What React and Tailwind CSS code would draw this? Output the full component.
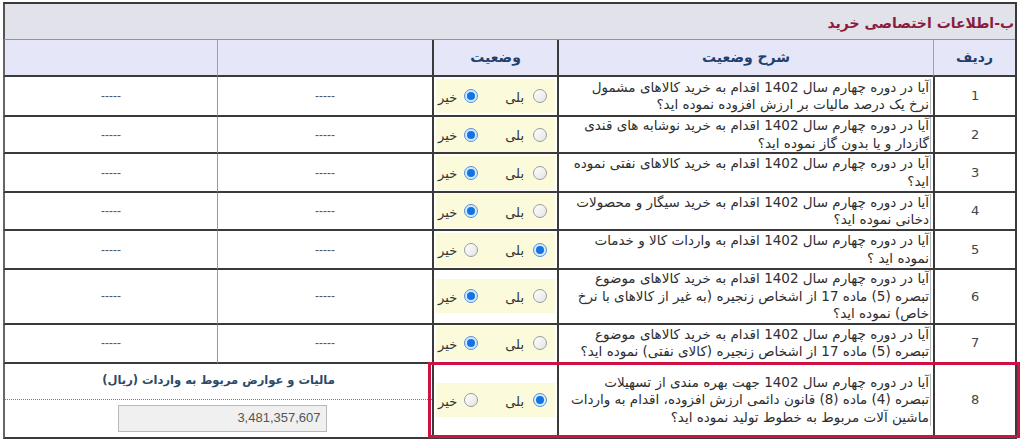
import React from 'react';

const rows = [
    { n: 1, h: 'h-[40px]', yes: false, lines: ['آیا در دوره چهارم سال 1402 اقدام به خرید کالاهای مشمول', 'نرخ یک درصد مالیات بر ارزش افزوده نموده اید؟'] },
    { n: 2, h: 'h-[37px]', yes: false, lines: ['آیا در دوره چهارم سال 1402 اقدام به خرید نوشابه های قندی', 'گازدار و یا بدون گاز نموده اید؟'] },
    { n: 3, h: 'h-[39px]', yes: false, lines: ['آیا در دوره چهارم سال 1402 اقدام به خرید کالاهای نفتی نموده', 'اید؟'] },
    { n: 4, h: 'h-[38px]', yes: false, lines: ['آیا در دوره چهارم سال 1402 اقدام به خرید سیگار و محصولات', 'دخانی نموده اید؟'] },
    { n: 5, h: 'h-[39px]', yes: true, lines: ['آیا در دوره چهارم سال 1402 اقدام به واردات کالا و خدمات', 'نموده اید ؟'] },
    { n: 6, h: 'h-[53px]', yes: false, lines: ['آیا در دوره چهارم سال 1402 اقدام به خرید کالاهای موضوع', 'تبصره (5) ماده 17 از اشخاص زنجیره (به غیر از کالاهای با نرخ', 'خاص) نموده اید؟'] },
    { n: 7, h: 'h-[39px]', yes: false, lines: ['آیا در دوره چهارم سال 1402 اقدام به خرید کالاهای موضوع', 'تبصره (5) ماده 17 از اشخاص زنجیره (کالای نفتی) نموده اید؟'] },
];

const last = {
    n: 8,
    yes: true,
    lines: ['آیا در دوره چهارم سال 1402 جهت بهره مندی از تسهیلات', 'تبصره (4) ماده (8) قانون دائمی ارزش افزوده، اقدام به واردات', 'ماشین آلات مربوط به خطوط تولید نموده اید؟'],
};

const fa = "font-['DejaVu_Sans',sans-serif]";
const cell = 'border-b-2 border-l-2 border-[#3a3a3a] p-0 align-middle';

function Radio({ checked }) {
    if (checked) {
        return (
            <span className="w-[14px] h-[14px] shrink-0 rounded-full border border-[#4b93dd] bg-[#d8e9fb] flex items-center justify-center">
                <span className="w-[8px] h-[8px] rounded-full bg-[#1473e0]" />
            </span>
        );
    }
    return <span className="w-[14px] h-[14px] shrink-0 rounded-full border border-[#9c9c9c] bg-gradient-to-br from-white to-[#e4e4e4]" />;
}

function Choice({ yes }) {
    return (
        <div className={`mx-[2px] h-[34px] bg-[#fbfbdc] flex items-center pr-[8px] text-[13px] text-[#333] whitespace-nowrap ${fa}`}>
            <Radio checked={yes} />
            <span className="mr-[9px] mt-[3px]">بلی</span>
            <span className="mr-[27px] flex"><Radio checked={!yes} /></span>
            <span className="mr-[7px] mt-[3px]">خیر</span>
        </div>
    );
}

function Desc({ lines }) {
    return (
        <div className="flex pr-[2px]">
            <div className={`border-r border-[#b5b5b5] pr-[1px] text-[13.5px] leading-[17.5px] text-[#2e2e2e] whitespace-nowrap ${fa}`}>
                {lines.map((l, i) => (
                    <div key={i}>{l}</div>
                ))}
            </div>
        </div>
    );
}

export default function App() {
    return (
        <div className="relative w-[1024px] h-[440px] bg-white overflow-hidden pt-[2px] pl-[3px]">
            <table dir="rtl" className="w-[1012px] table-fixed border-separate border-spacing-0 border-t-2 border-r-2 border-[#3a3a3a]">
                <colgroup>
                    <col className="w-[82px]" />
                    <col className="w-[376px]" />
                    <col className="w-[125px]" />
                    <col className="w-[215px]" />
                    <col className="w-[214px]" />
                </colgroup>
                <tbody>
                    <tr>
                        <td colSpan={5} className="h-[36px] p-0 pr-[1px] bg-[#e1e2ea] border-b border-l-2 border-b-[#8e94b0] border-l-[#555] align-middle">
                            <span className={`text-[14px] font-bold text-[#8c1c3d] ${fa}`}>ب-اطلاعات اختصاصی خرید</span>
                        </td>
                    </tr>
                    <tr className={`bg-[#e6e6f9] text-[14px] font-bold text-[#22406e] ${fa}`}>
                        <td className="h-[37px] p-0 text-center border-b-2 border-l border-b-[#3a3a3a] border-l-[#9aa0bb]">ردیف</td>
                        <td className="p-0 text-center border-b-2 border-l-2 border-[#3a3a3a]">شرح وضعیت</td>
                        <td className="p-0 text-center border-b-2 border-l-2 border-[#3a3a3a]">وضعیت</td>
                        <td className="p-0 border-b-2 border-l border-b-[#3a3a3a] border-l-[#9aa0bb]"></td>
                        <td className="p-0 border-b-2 border-l-2 border-b-[#3a3a3a] border-l-[#666]"></td>
                    </tr>
                    {rows.map((r) => (
                        <tr key={r.n}>
                            <td className={`${cell} ${r.h} text-center text-[13px] text-[#444] font-['DejaVu_Sans',sans-serif]`}>{r.n}</td>
                            <td className={cell}><Desc lines={r.lines} /></td>
                            <td className={cell}><Choice yes={r.yes} /></td>
                            <td className="border-b-2 border-l border-b-[#3a3a3a] border-l-[#9a9a9a] p-0 text-center text-[12px] text-[#555] font-['Liberation_Sans',sans-serif]">-----</td>
                            <td className="border-b-2 border-l-2 border-b-[#3a3a3a] border-l-[#666] p-0 text-center text-[12px] text-[#555] font-['Liberation_Sans',sans-serif]">-----</td>
                        </tr>
                    ))}
                    <tr>
                        <td className={`${cell} h-[75px] text-center text-[13px] text-[#444] font-['DejaVu_Sans',sans-serif]`}>{last.n}</td>
                        <td className={cell}><Desc lines={last.lines} /></td>
                        <td className={cell}><Choice yes={last.yes} /></td>
                        <td colSpan={2} className="border-b-2 border-l-2 border-b-[#3a3a3a] border-l-[#666] p-0 align-top">
                            <div className="h-[36px] flex items-center justify-center border-b border-dotted border-[#7a7a7a]">
                                <span className={`text-[11.5px] font-bold text-[#2d4a66] ${fa}`}>مالیات و عوارض مربوط به واردات (ریال)</span>
                            </div>
                            <div className="flex justify-center pt-[5px] pl-[7px]">
                                <div className="w-[209px] h-[27px] bg-[#f0f0f0] border border-[#b9b9b9] flex items-center justify-start pr-[5px] text-[13px] text-[#555] font-['Liberation_Sans',sans-serif]">
                                    3,481,357,607
                                </div>
                            </div>
                        </td>
                    </tr>
                </tbody>
            </table>
            <div className="absolute left-[428px] top-[362px] w-[592px] h-[76px] border-[3px] border-[#cf1241]" />
        </div>
    );
}
